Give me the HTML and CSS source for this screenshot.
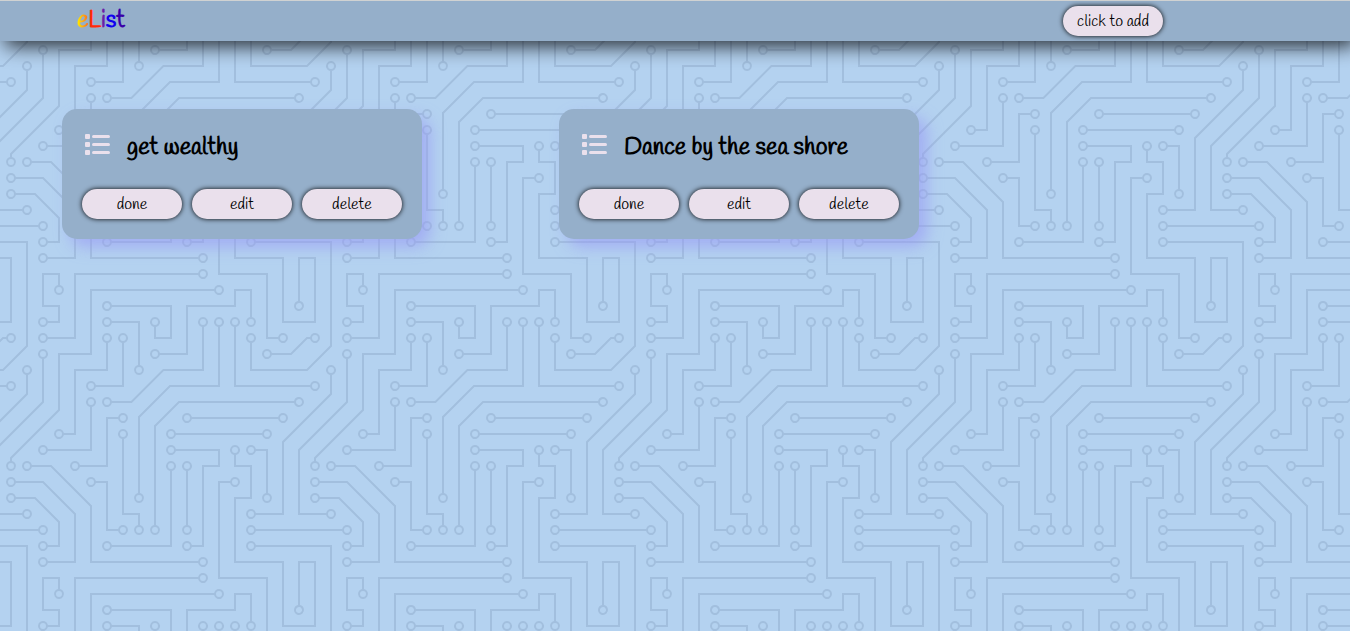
FILE: index.html
```html
<!DOCTYPE html>
<html lang="en">
<head>
<meta charset="utf-8">
<title>eList</title>
<link rel="stylesheet" href="styles.css">
</head>
<body>
<header class="navbar">
  <h1 class="logo"><span class="logo-e">e</span><span class="logo-l">L</span><span class="logo-i">i</span><span class="logo-s">s</span><span class="logo-t">t</span></h1>
  <button class="btn" type="button">click to add</button>
</header>
<main class="tasks">
  <article class="card">
    <div class="card-head">
      <svg class="list-icon" viewBox="0 0 26 24" aria-hidden="true"><rect x="0" y="0" width="5" height="5" rx="1"/><rect x="0" y="8" width="5" height="5" rx="1"/><rect x="0" y="16" width="5" height="5" rx="1"/><rect x="7" y="1" width="18" height="3" rx="1.5"/><rect x="7" y="9" width="18" height="3" rx="1.5"/><rect x="7" y="17" width="18" height="3" rx="1.5"/></svg>
      <h2 class="card-title">get wealthy</h2>
    </div>
    <div class="actions">
      <button class="btn" type="button">done</button>
      <button class="btn" type="button">edit</button>
      <button class="btn" type="button">delete</button>
    </div>
  </article>
  <article class="card">
    <div class="card-head">
      <svg class="list-icon" viewBox="0 0 26 24" aria-hidden="true"><rect x="0" y="0" width="5" height="5" rx="1"/><rect x="0" y="8" width="5" height="5" rx="1"/><rect x="0" y="16" width="5" height="5" rx="1"/><rect x="7" y="1" width="18" height="3" rx="1.5"/><rect x="7" y="9" width="18" height="3" rx="1.5"/><rect x="7" y="17" width="18" height="3" rx="1.5"/></svg>
      <h2 class="card-title">Dance by the sea shore</h2>
    </div>
    <div class="actions">
      <button class="btn" type="button">done</button>
      <button class="btn" type="button">edit</button>
      <button class="btn" type="button">delete</button>
    </div>
  </article>
</main>
</body>
</html>
```
FILE: styles.css
```css
* {
  box-sizing: border-box;
}

body {
  margin: 0;
  min-height: 100vh;
  font-family: Handlee, Lato, "Open Sans", sans-serif;
  color: #000;
  background-color: #b4d2f0;
  background-position: -6px 1px;
  background-image: url("data:image/svg+xml,%3Csvg xmlns='http://www.w3.org/2000/svg' viewBox='0 0 304 304' width='304' height='304'%3E%3Cpath fill='%23a2bfde' d='M44.1 224a5 5 0 1 1 0 2H0v-2h44.1zm160 48a5 5 0 1 1 0 2H82v-2h122.1zm57.8-46a5 5 0 1 1 0-2H304v2h-42.1zm0 16a5 5 0 1 1 0-2H304v2h-42.1zm6.2-114a5 5 0 1 1 0 2h-86.2a5 5 0 1 1 0-2h86.2zm-256-48a5 5 0 1 1 0 2H0v-2h12.1zm185.8 34a5 5 0 1 1 0-2h86.2a5 5 0 1 1 0 2h-86.2zM258 12.1a5 5 0 1 1-2 0V0h2v12.1zm-64 208a5 5 0 1 1-2 0v-54.2a5 5 0 1 1 2 0v54.2zm48-198.2V80h62v2h-64V21.9a5 5 0 1 1 2 0zm16 16V64h46v2h-48V37.9a5 5 0 1 1 2 0zm-128 96V208h16v12.1a5 5 0 1 1-2 0V210h-16v-76.1a5 5 0 1 1 2 0zm-5.9-21.9a5 5 0 1 1 0 2H114v48H85.9a5 5 0 1 1 0-2H112v-48h12.1zm-6.2 130a5 5 0 1 1 0-2H176v-74.1a5 5 0 1 1 2 0V242h-60.1zm-16-64a5 5 0 1 1 0-2H114v48h10.1a5 5 0 1 1 0 2H112v-48h-10.1zM66 284.1a5 5 0 1 1-2 0V274H50v30h-2v-32h18v12.1zM236.1 176a5 5 0 1 1 0 2H226v94h48v32h-2v-30h-48v-98h12.1zm25.8-30a5 5 0 1 1 0-2H274v44.1a5 5 0 1 1-2 0V146h-10.1zm-64 96a5 5 0 1 1 0-2H208v-80h16v-14h-42.1a5 5 0 1 1 0-2H226v18h-16v80h-12.1zm86.2-210a5 5 0 1 1 0 2H272V0h2v32h10.1zM98 101.9V146H53.9a5 5 0 1 1 0-2H96v-42.1a5 5 0 1 1 2 0zM53.9 34a5 5 0 1 1 0-2H80V0h2v34H53.9zm60.1 3.9V66H82v64H69.9a5 5 0 1 1 0-2H80V64h32V37.9a5 5 0 1 1 2 0zM101.9 82a5 5 0 1 1 0-2H128V37.9a5 5 0 1 1 2 0V82h-28.1zm16-64a5 5 0 1 1 0-2H146v44.1a5 5 0 1 1-2 0V18h-26.1zm102.2 270a5 5 0 1 1 0 2H98v14h-2v-16h124.1zM242 149.9V160h16v34h-16v62h48v48h-2v-46h-48v-66h16v-30h-16v-12.1a5 5 0 1 1 2 0zM53.9 18a5 5 0 1 1 0-2H64V2H48V0h18v18H53.9zm112 32a5 5 0 1 1 0-2H192V0h50v2h-48v48h-28.1zm-48-48a5 5 0 0 1-9.8-2h2.07a3 3 0 1 0 5.66 0H178v34h-18V21.9a5 5 0 1 1 2 0V32h14V2h-58.1zm0 96a5 5 0 1 1 0-2H137l32-32h39V21.9a5 5 0 1 1 2 0V66h-40.17l-32 32H117.9zm28.1 90.1a5 5 0 1 1-2 0v-76.51L175.59 80H224V21.9a5 5 0 1 1 2 0V82h-49.59L146 112.41v75.69zm16 32a5 5 0 1 1-2 0v-99.51L184.59 96H300.1a5 5 0 0 1 3.9-3.9v2.07a3 3 0 0 0 0 5.66v2.07a5 5 0 0 1-3.9-3.9H185.41L162 121.41v98.69zm-144-64a5 5 0 1 1-2 0v-3.51l48-48V48h32V0h2v50H66v55.41l-48 48v2.69zM50 53.9v43.51l-48 48V208h26.1a5 5 0 1 1 0 2H0v-65.41l48-48V53.9a5 5 0 1 1 2 0zm-16 16V89.41l-34 34v-2.82l32-32V69.9a5 5 0 1 1 2 0zM12.1 32a5 5 0 1 1 0 2H9.41L0 43.41V40.6L8.59 32h3.51zm265.8 18a5 5 0 1 1 0-2h18.69l7.41-7.41v2.82L297.41 50H277.9zm-16 160a5 5 0 1 1 0-2H288v-71.41l16-16v2.82l-14 14V210h-28.1zm-208 32a5 5 0 1 1 0-2H64v-22.59L40.59 194H21.9a5 5 0 1 1 0-2H41.41L66 216.59V242H53.9zm150.2 14a5 5 0 1 1 0 2H96v-56.6L56.6 162H37.9a5 5 0 1 1 0-2h19.5L98 200.6V256h106.1zm-150.2 2a5 5 0 1 1 0-2H80v-46.59L48.59 178H21.9a5 5 0 1 1 0-2H49.41L82 208.59V258H53.9zM34 39.8v1.61L9.41 66H0v-2h8.59L32 40.59V0h2v39.8zM2 300.1a5 5 0 0 1 3.9 3.9H3.83A3 3 0 0 0 0 302.17V256h18v48h-2v-46H2v42.1zM34 241v63h-2v-62H0v-2h34v1zM17 18H0v-2h16V0h2v18h-1zm273-2h14v2h-16V0h2v16zm-32 273v15h-2v-14h-14v14h-2v-16h18v1zM0 92.1A5.02 5.02 0 0 1 6 97a5 5 0 0 1-6 4.9v-2.07a3 3 0 1 0 0-5.66V92.1zM80 272h2v32h-2v-32zm37.9 32h-2.07a3 3 0 0 0-5.66 0h-2.07a5 5 0 0 1 9.8 0zM5.9 0A5.02 5.02 0 0 1 0 5.9V3.83A3 3 0 0 0 3.83 0H5.9zm294.2 0h2.07A3 3 0 0 0 304 3.83V5.9a5 5 0 0 1-3.9-5.9zm3.9 300.1v2.07a3 3 0 0 0-1.83 1.83h-2.07a5 5 0 0 1 3.9-3.9z'/%3E%3Cpath fill='none' stroke='%23b4d2f0' stroke-width='6' stroke-linecap='round' d='M49 225h0M209 273h0M257 225h0M257 241h0M273 129h0M177 129h0M17 81h0M193 113h0M289 113h0M257 17h0M193 225h0M193 161h0M241 17h0M257 33h0M145 225h0M129 129h0M129 113h0M81 161h0M113 241h0M177 161h0M97 177h0M129 225h0M65 289h0M241 177h0M257 145h0M273 193h0M193 241h0M177 145h0M289 33h0M49 145h0M97 97h0M49 33h0M65 129h0M113 33h0M97 81h0M129 33h0M113 17h0M145 65h0M225 289h0M241 145h0M49 17h0M161 49h0M161 17h0M113 97h0M209 17h0M145 193h0M225 17h0M161 225h0M17 161h0M33 209h0M49 49h0M33 65h0M17 33h0M273 49h0M257 209h0M49 241h0M17 193h0M209 257h0M33 161h0M49 257h0M17 177h0'/%3E%3C/svg%3E");
}

.navbar {
  display: flex;
  align-items: center;
  justify-content: space-between;
  padding: 5px 187px 5px 77px;
  border-top: 1px solid #d0d2d2;
  background: #95afca;
  box-shadow: 5px 5px 20px rgba(0, 0, 0, 0.8);
}

.logo {
  margin: 0;
  font-size: 24px;
  line-height: 26px;
  font-weight: 700;
}

.logo-e {
  color: transparent;
  background: linear-gradient(90deg, #ffe600 10%, #ff7a1a 90%);
  background-clip: text;
}

.logo-l {
  color: #ff2a0a;
}

.logo-i {
  color: #6a1fa8;
}

.logo-s {
  color: #1200f0;
}

.logo-t {
  color: #3a00a8;
}

.tasks {
  display: flex;
  flex-wrap: wrap;
  gap: 40px 137px;
  padding: 68px 62px;
}

.card {
  width: 360px;
  padding: 20px;
  border-radius: 15px;
  background: #95afca;
  box-shadow: 8px 8px 15px rgba(150, 150, 245, 0.6);
}

.card-head {
  display: flex;
  align-items: flex-start;
  gap: 16px;
  padding-left: 3px;
  margin-bottom: 22px;
}

.list-icon {
  width: 26px;
  height: 24px;
  margin-top: 5px;
  fill: #eae0ec;
}

.card-title {
  margin: 0;
  font-size: 24px;
  line-height: 38px;
  font-weight: 700;
}

.actions {
  display: flex;
  gap: 10px;
}

.btn {
  width: 100px;
  height: 30px;
  padding: 0;
  border: 0;
  border-radius: 15px;
  font-family: inherit;
  font-size: 16px;
  font-weight: 400;
  color: #000;
  background: #eae0ec;
  box-shadow: 0 0 5px #000;
}
```
